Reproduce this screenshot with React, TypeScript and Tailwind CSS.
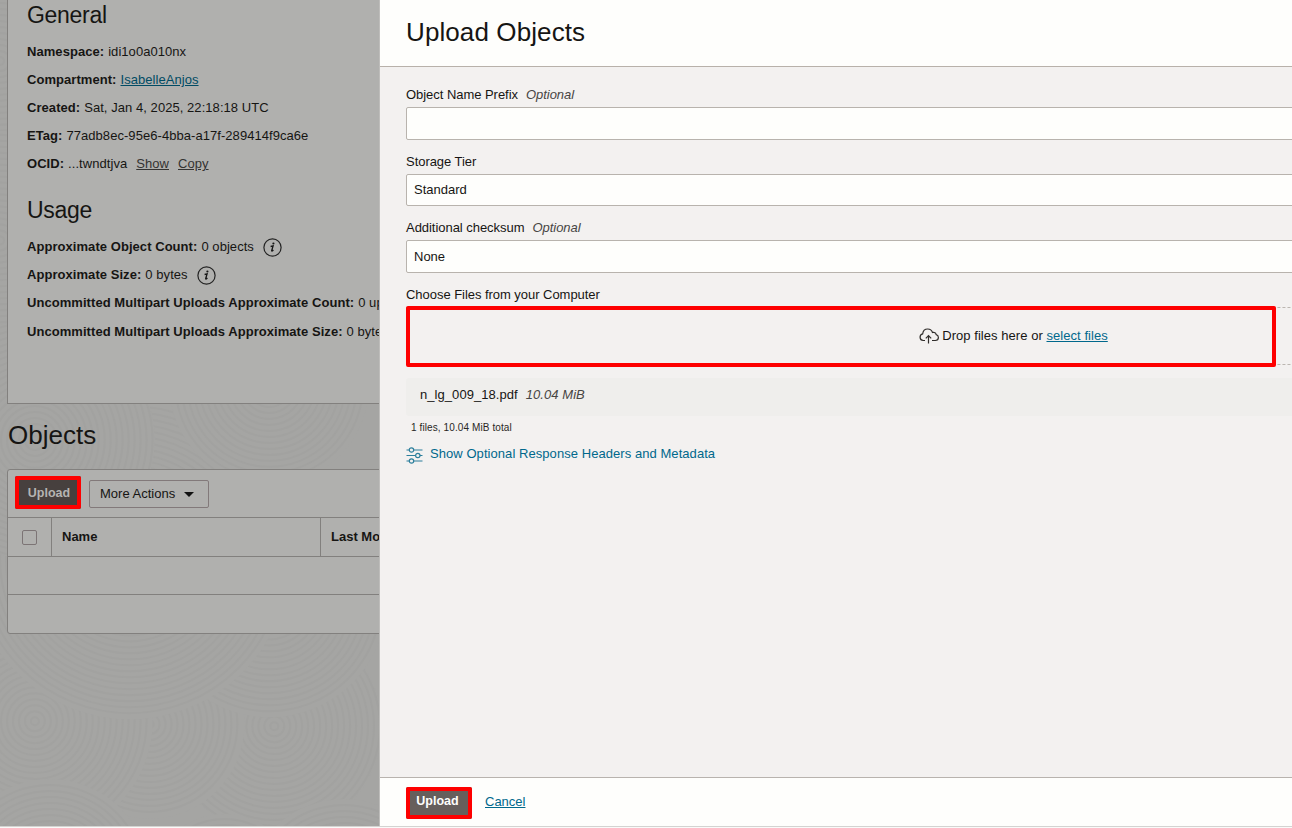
import type { ReactNode } from "react";

function Info() {
  return (
    <svg className="ml-[9px] mt-px h-[19px] w-[19px] shrink-0" viewBox="0 0 19 19" fill="none">
      <circle cx="9.5" cy="9.5" r="8.6" stroke="#232323" strokeWidth="1.2" />
      <circle cx="10.4" cy="5.5" r="1.1" fill="#161616" />
      <path d="M7.600 8.500l2.500-.6-1.400 4.600c-.2.900.500.800 1.700-.5" stroke="#161616" strokeWidth="1.3" />
    </svg>
  );
}

function Row({ label, children, className = "h-7" }: { label: string; children: ReactNode; className?: string }) {
  return (
    <div className={`flex shrink-0 items-center whitespace-nowrap pt-[2px] tracking-[0.055px] ${className}`}>
      <b className="mr-1 font-bold">{label}</b>
      {children}
    </div>
  );
}

const swirlCenters = [
  [150, 645, 70], [275, 727, 108], [150, 725, 95], [35, 722, 118], [270, 600, 118],
  [0, 60, 110], [0, 240, 110], [130, 560, 160], [35, 440, 120], [270, 385, 100],
  [50, 880, 100], [345, 900, 100], [225, 890, 75],
];

function Swirls() {
  return (
    <svg className="absolute inset-0 h-full w-full" viewBox="0 0 380 826" fill="none">
      {swirlCenters.map(([x, y, max], i) => (
        <g key={i}>
          <circle cx={x} cy={y} r={max} fill="#a5a5a3" />
          {Array.from({ length: Math.floor(max / 6) }, (_, n) => (
            <circle key={n} cx={x} cy={y} r={4 + n * 6} stroke="#a2a2a0" strokeWidth="2" />
          ))}
        </g>
      ))}
    </svg>
  );
}

function Background() {
  return (
    <main className="relative h-[826px] w-[379px] shrink-0 overflow-hidden bg-[#a5a5a3]">
      <Swirls />
      <div className="relative ml-[7px] flex w-[600px] flex-col">
        <section className="flex h-[404px] flex-col border-b border-l border-[#82807e] bg-[#b0b0ae] pl-[19px]">
          <h2 className="h-[37px] shrink-0 text-[23px] leading-[30px] tracking-[-0.3px]">General</h2>
          <Row label="Namespace:">idi1o0a010nx</Row>
          <Row label="Compartment:"><a className="text-[#004b64] underline">IsabelleAnjos</a></Row>
          <Row label="Created:">Sat, Jan 4, 2025, 22:18:18 UTC</Row>
          <Row label="ETag:">77adb8ec-95e6-4bba-a17f-289414f9ca6e</Row>
          <Row label="OCID:">
            ...twndtjva
            <a className="ml-[9px] text-[#343332] underline">Show</a>
            <a className="ml-[9px] text-[#343332] underline">Copy</a>
          </Row>
          <h2 className="mt-[18px] h-[37px] shrink-0 text-[23px] leading-[30px] tracking-[-0.3px]">Usage</h2>
          <Row label="Approximate Object Count:">0 objects<Info /></Row>
          <Row label="Approximate Size:">0 bytes<Info /></Row>
          <Row label="Uncommitted Multipart Uploads Approximate Count:">0 uploads</Row>
          <Row label="Uncommitted Multipart Uploads Approximate Size:" className="h-[30px]">0 bytes</Row>
        </section>
        <h1 className="h-[65px] pl-px pt-[13px] text-[26px] leading-[36px]">Objects</h1>
        <section className="h-[165px] overflow-hidden rounded-[3px] border border-[#82807e] bg-[#b0b0ae]">
          <div className="flex h-[47px] items-start pl-[7px] pt-[6px]">
            <button className="relative h-[33px] w-[66px] rounded-[2px] bg-[#47403e] pl-[2px] pt-px text-[12.5px] font-bold text-[#b5b4b2]">
              Upload
              <span className="absolute inset-0 rounded-[2px] border-4 border-[#fe0000]" />
            </button>
            <button className="ml-[8px] mt-[4px] flex h-7 w-[120px] items-center rounded-[2px] border border-[#82797a] pb-px pl-[10px]">
              More Actions
              <svg className="ml-[9px] mt-px h-[5px] w-[10px]" viewBox="0 0 10 5"><path d="M0 0h10L5 5z" fill="#111" /></svg>
            </button>
          </div>
          <div className="flex h-10 border-y border-[#82807e] font-bold leading-[37px]">
            <div className="flex w-[44px] items-center border-r border-[#82807e] pl-[14px]">
              <span className="mt-px h-[15px] w-[15px] rounded-[2px] border border-[#7c7475]" />
            </div>
            <div className="w-[269px] border-r border-[#82807e] pl-[10px]">Name</div>
            <div className="pl-[10px]">Last Modified</div>
          </div>
          <div className="h-[38px] border-b border-[#82807e]" />
        </section>
      </div>
    </main>
  );
}

function Label({ children, optional }: { children: ReactNode; optional?: boolean }) {
  return (
    <div className="flex h-4 shrink-0 items-center pt-[2px] leading-4 tracking-[-0.04px]">
      {children}
      {optional && <i className="ml-2 text-[#474543]">Optional</i>}
    </div>
  );
}

function Drawer() {
  return (
    <aside className="flex h-[826px] w-[913px] shrink-0 flex-col overflow-hidden border-l border-[#bebdbb] bg-[#f3f1f0]">
      <header className="h-[67px] shrink-0 border-b border-[#b8b1aa] bg-[#fefefc] pl-[26px]">
        <h1 className="text-[26px] leading-[64px] tracking-[0.1px]">Upload Objects</h1>
      </header>
      <div className="flex w-[1241px] grow flex-col pl-[26px] pt-[19px]">
        <Label optional>Object Name Prefix</Label>
        <div className="mt-[5px] h-[33px] shrink-0 rounded-[2px] border border-[#b8b3ad] bg-[#fefefc]" />
        <div className="mt-[13px]"><Label>Storage Tier</Label></div>
        <div className="mt-[5px] h-8 shrink-0 rounded-[2px] border border-[#b8b3ad] bg-[#fefefc] pl-[7px] leading-[29px]">Standard</div>
        <div className="mt-[13px]"><Label optional>Additional checksum</Label></div>
        <div className="mt-[5px] h-[33px] shrink-0 rounded-[2px] border border-[#b8b3ad] bg-[#fefefc] pl-[7px] leading-[31px]">None</div>
        <div className="mt-[13px]"><Label>Choose Files from your Computer</Label></div>
        <div className="relative mt-[5px] flex h-[58px] shrink-0 items-center justify-center border border-dashed border-[#bbb6b1] tracking-[0.05px]">
          <svg className="mr-[3px] h-[16px] w-[20px]" viewBox="0 0 20 16" fill="none" stroke="#302d2b" strokeWidth="1.2">
            <path d="M6 12.500H4.200A3.400 3.400 0 0 1 3.700 5.800C4 2.800 6 1 8.700 1c2.400 0 4.100 1.300 4.800 3.500.2-.1 1-.2 1.500-.1 1.300.2 2.100 1.100 2.200 2.200 1.500.4 2.200 1.500 2.200 2.900 0 1.800-1.300 3-3.100 3H13" />
            <path d="M9.500 15.500V8M6.800 10.400L9.500 7.700l2.700 2.700" />
          </svg>
          Drop files here or&nbsp;<a className="text-[#00688c] underline">select files</a>
          <span className="absolute -left-[1px] -top-[2px] h-[61px] w-[870px] rounded-[2px] border-4 border-[#fe0000]" />
        </div>
        <div className="mt-[13px] flex h-[38px] shrink-0 items-center rounded-[3px] bg-[#efeeec] pb-[4px] pl-[14px] tracking-[0.06px]">
          n_lg_009_18.pdf<i className="ml-2 text-[#474543]">10.04 MiB</i>
        </div>
        <div className="mt-[5px] h-[14px] shrink-0 pl-[5px] text-[10px] leading-[14px] tracking-[0.1px] text-[#292725]">1 files, 10.04 MiB total</div>
        <div className="mt-[9px] flex h-5 shrink-0 items-center text-[#00688c]">
          <svg className="mr-[7px] mt-[2px] h-[17px] w-[17px]" viewBox="0 0 17 17" fill="none" stroke="#2c7f9c" strokeWidth="1.200">
            <path d="M0.500 3H3M8 3h8.500M0.500 8.500h9M14 8.500h2.500M0.500 14H3M8 14h8.500" />
            <circle cx="5.500" cy="3" r="2.200" /><circle cx="11.800" cy="8.500" r="2.200" /><circle cx="5.500" cy="14" r="2.200" />
          </svg>
          <span className="tracking-[0.06px]">Show Optional Response Headers and Metadata</span>
        </div>
      </div>
      <footer className="flex h-[49px] shrink-0 border-t border-[#b8b3ae] bg-[#fefefc] pl-[26px] pt-[9px]">
        <button className="relative h-[32px] w-[66px] rounded-[2px] bg-[#665f5c] pb-[3px] pr-[3px] text-[12.5px] font-bold text-[#fefefc]">
          Upload
          <span className="absolute inset-0 rounded-[2px] border-4 border-[#fe0000]" />
        </button>
        <a className="ml-[13px] leading-[30px] text-[#00688c] underline">Cancel</a>
      </footer>
    </aside>
  );
}

export default function App() {
  return (
    <div className="h-[828px] w-[1292px] overflow-hidden bg-[#fafaf9] font-['Liberation_Sans',Arial,sans-serif] text-[13px] text-[#161513]">
      <div className="flex h-[827px] border-b border-[#d4d3d1]">
        <Background />
        <Drawer />
      </div>
    </div>
  );
}
